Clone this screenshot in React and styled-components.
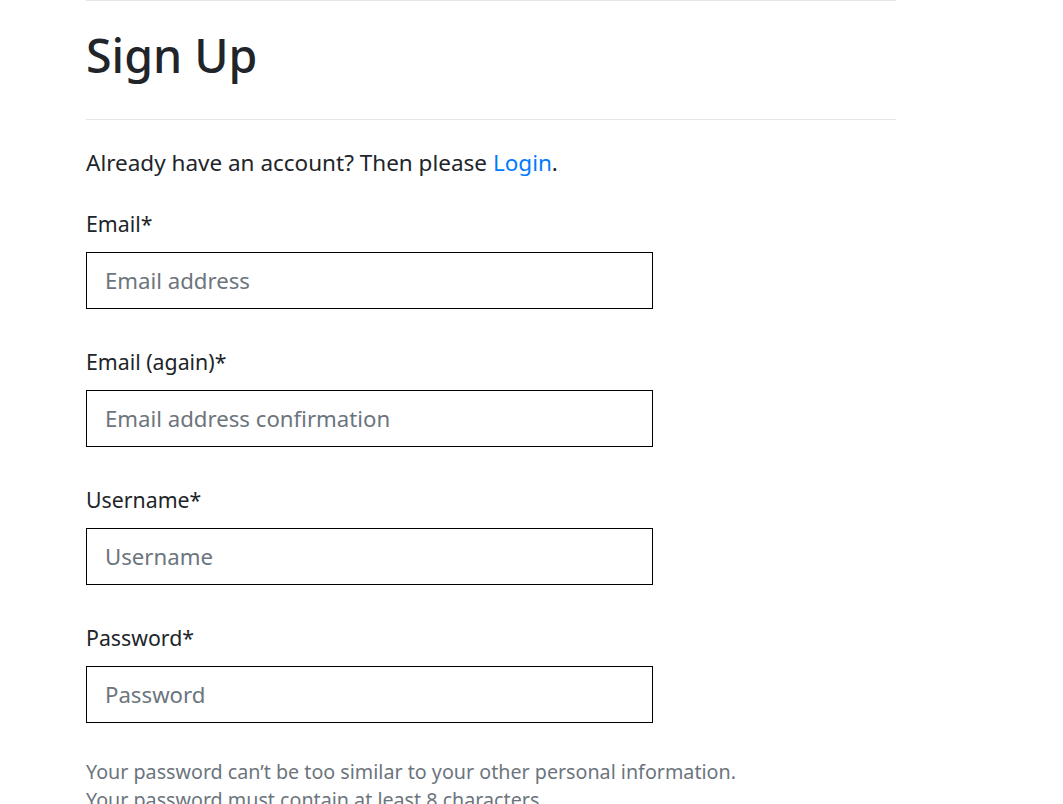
import React from "react";
import styled, { createGlobalStyle } from "styled-components";

const Global = createGlobalStyle`
  html, body { margin: 0; padding: 0; background: #fff; }
  body { font-family: "Noto Sans", "Open Sans", sans-serif; color: #212529; }
  * { box-sizing: border-box; }
`;

const Container = styled.div`
  width: 810px;
  margin-left: 86px;
  border-top: 1px solid #e5e5e5;
`;

const Title = styled.h1`
  margin: 25px 0 0;
  font-size: 46.5px;
  line-height: 58px;
  font-weight: 500;
  padding-bottom: 35px;
  border-bottom: 1px solid #e5e5e5;
`;

const Lead = styled.p`
  margin: 28px 0 0;
  font-size: 22.5px;
  line-height: 30px;
`;

const Link = styled.a`
  color: #007bff;
  text-decoration: none;
`;

const Form = styled.form`
  display: flex;
  flex-direction: column;
  margin-top: 31px;
  gap: 38px;
`;

const Field = styled.div`
  display: flex;
  flex-direction: column;
  gap: 13px;
`;

const Label = styled.label`
  font-size: 21.3px;
  line-height: 30px;
`;

const Input = styled.input`
  width: 567px;
  height: 57px;
  border: 1px solid #000;
  border-radius: 0;
  padding: 0 18px;
  font-family: inherit;
  font-size: 22.2px;
  color: #212529;
  outline: none;
  &::placeholder { color: #6c757d; opacity: 1; }
`;

const Help = styled.ul`
  list-style: none;
  margin: 35px 0 0;
  padding: 0;
  color: #6c757d;
  font-size: 19.7px;
  line-height: 28px;
`;

const fields = [
  { label: "Email*", ph: "Email address", type: "email" },
  { label: "Email (again)*", ph: "Email address confirmation", type: "email" },
  { label: "Username*", ph: "Username", type: "text" },
  { label: "Password*", ph: "Password", type: "password" },
];

export default function App() {
  return (
    <>
      <Global />
      <Container>
        <Title>Sign Up</Title>
        <Lead>
          Already have an account? Then please <Link href="#">Login</Link>.
        </Lead>
        <Form>
          {fields.map((f) => (
            <Field key={f.label}>
              <Label>{f.label}</Label>
              <Input type={f.type} placeholder={f.ph} />
            </Field>
          ))}
        </Form>
        <Help>
          <li>Your password can’t be too similar to your other personal information.</li>
          <li>Your password must contain at least 8 characters.</li>
        </Help>
      </Container>
    </>
  );
}
